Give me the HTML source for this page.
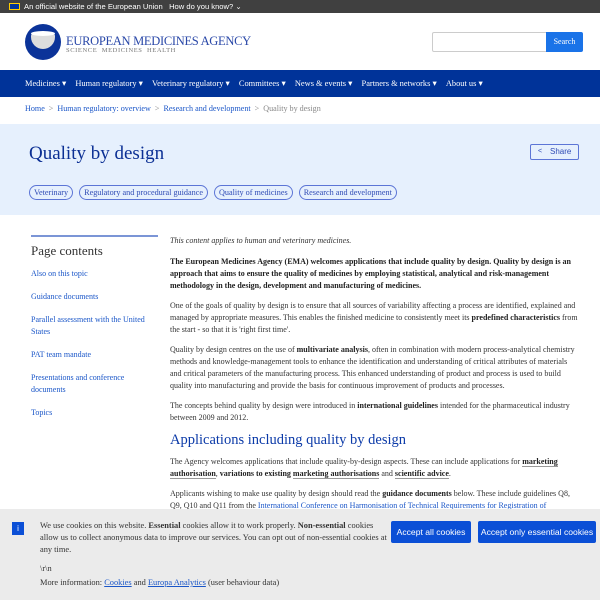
<!DOCTYPE html>
<html><head><meta charset="utf-8"><style>
*{margin:0;padding:0;box-sizing:border-box}
body{width:600px;height:600px;overflow:hidden;font-family:"Liberation Serif",serif;color:#333;background:#fff;position:relative}
.a{position:absolute}
.top{left:0;top:0;width:600px;height:13px;background:#404040;color:#fff;font:7.6px "Liberation Sans",sans-serif;line-height:13px;padding-left:24px}
.nav{left:0;top:70px;width:600px;height:27px;background:#003399;color:#fff;font-size:8.4px;line-height:27px;padding-left:25px;white-space:nowrap}
.nav span{margin-right:9.2px}
.hero{left:0;top:124px;width:600px;height:91px;background:#e6f0fd}
.tag{display:inline-block;border:1px solid #5c75d6;border-radius:8px;font-size:8.2px;color:#2f4bb5;padding:1px 4px;margin-right:6px;line-height:11px}
.side a{display:block;color:#1a56c8;font-size:8px;line-height:12px;text-decoration:none}
.c p{font-size:8px;line-height:12px;margin-bottom:8px;color:#333}
.c b{color:#222}
.u{border-bottom:1px solid #999}
.btn{background:#0b4fd6;color:#fff;font:8.6px "Liberation Sans",sans-serif;height:22px;line-height:22px;text-align:center;border-radius:2px}
.bc i{font-style:normal;margin:0 4px}
</style></head><body>
<div class="a top"><span style="display:inline-block;width:11px;height:7px;background:#039;border:1px solid #fc0;position:absolute;left:9px;top:3px"></span>An official website of the European Union &nbsp; How do you know? ⌄</div>
<div class="a" style="left:25px;top:24px;width:36px;height:36px;border-radius:50%;background:#0b3399"></div>
<div class="a" style="left:31px;top:33px;width:24px;height:16px;background:#ddd;border-radius:3px 3px 12px 12px"></div>
<div class="a" style="left:31px;top:31px;width:24px;height:5px;background:#fff;border-radius:50%"></div>
<div class="a" style="left:66px;top:34px;font-size:12.5px;color:#2a48a8;letter-spacing:-0.3px">EUROPEAN MEDICINES AGENCY</div>
<div class="a" style="left:66px;top:47px;font-size:6.5px;color:#777;letter-spacing:0.6px">SCIENCE &nbsp;MEDICINES &nbsp;HEALTH</div>
<div class="a" style="left:432px;top:32px;width:115px;height:20px;border:1px solid #ccc;border-radius:2px 0 0 2px"></div>
<div class="a" style="left:546px;top:32px;width:37px;height:20px;background:#1a73e8;color:#fff;font-size:8px;line-height:20px;text-align:center;border-radius:0 2px 2px 0">Search</div>
<div class="a nav"><span>Medicines ▾</span><span>Human regulatory ▾</span><span>Veterinary regulatory ▾</span><span>Committees ▾</span><span>News &amp; events ▾</span><span>Partners &amp; networks ▾</span><span>About us ▾</span></div>
<div class="a bc" style="left:25px;top:104px;font-size:8.1px;color:#888;white-space:nowrap"><span style="color:#1a56c8">Home</span><i>&gt;</i><span style="color:#1a56c8">Human regulatory: overview</span><i>&gt;</i><span style="color:#1a56c8">Research and development</span><i>&gt;</i>Quality by design</div>
<div class="a hero"></div>
<div class="a" style="left:29px;top:143px;font-size:19px;color:#0b2f94">Quality by design</div>
<div class="a" style="left:530px;top:144px;width:49px;height:16px;border:1px solid #5c75d6;border-radius:2px;font:8px 'Liberation Sans',sans-serif;color:#2f4bb5;line-height:14px;padding-left:19px">Share<span style="position:absolute;left:7px;top:0;font-size:7px">&lt;</span></div>
<div class="a" style="left:29px;top:182px;white-space:nowrap"><span class="tag">Veterinary</span><span class="tag">Regulatory and procedural guidance</span><span class="tag">Quality of medicines</span><span class="tag">Research and development</span></div>
<div class="a" style="left:31px;top:235px;width:127px;height:2px;background:#7b95d6"></div>
<div class="a side" style="left:31px;top:243px;width:127px">
<div style="font-size:13px;color:#333;margin-bottom:9px">Page contents</div>
<a>Also on this topic</a><a style="margin-top:11px">Guidance documents</a><a style="margin-top:11px">Parallel assessment with the United States</a><a style="margin-top:11px">PAT team mandate</a><a style="margin-top:11px">Presentations and conference documents</a><a style="margin-top:11px">Topics</a></div>
<div class="a c" style="left:170px;top:235px;width:408px">
<p style="margin-bottom:9px"><i>This content applies to human and veterinary medicines.</i></p>
<p><b>The European Medicines Agency (EMA) welcomes applications that include quality by design. Quality by design is an approach that aims to ensure the quality of medicines by employing statistical, analytical and risk-management methodology in the design, development and manufacturing of medicines.</b></p>
<p>One of the goals of quality by design is to ensure that all sources of variability affecting a process are identified, explained and managed by appropriate measures. This enables the finished medicine to consistently meet its <b>predefined characteristics</b> from the start - so that it is 'right first time'.</p>
<p>Quality by design centres on the use of <b>multivariate analysis</b>, often in combination with modern process-analytical chemistry methods and knowledge-management tools to enhance the identification and understanding of critical attributes of materials and critical parameters of the manufacturing process. This enhanced understanding of product and process is used to build quality into manufacturing and provide the basis for continuous improvement of products and processes.</p>
<p>The concepts behind quality by design were introduced in <b>international guidelines</b> intended for the pharmaceutical industry between 2009 and 2012.</p>
<div style="font-size:14.5px;color:#0b3aa8;margin:0 0 7px">Applications including quality by design</div>
<p>The Agency welcomes applications that include quality-by-design aspects. These can include applications for <b class="u">marketing authorisation</b>, <b>variations to existing <span class="u">marketing authorisations</span></b> and <b class="u">scientific advice</b>.</p>
<p>Applicants wishing to make use quality by design should read the <b>guidance documents</b> below. These include guidelines Q8, Q9, Q10 and Q11 from the <span style="color:#1a56c8">International Conference on Harmonisation of Technical Requirements for Registration of</span></p>
</div>
<div class="a" style="left:0;top:509px;width:600px;height:91px;background:#ebebeb"></div>
<div class="a" style="left:12px;top:522px;width:12px;height:13px;background:#0b4fd6;color:#fff;font:8px 'Liberation Sans';text-align:center;line-height:13px">i</div>
<div class="a" style="left:40px;top:520px;width:348px;font-size:8.4px;line-height:12px;color:#333">We use cookies on this website. <b>Essential</b> cookies allow it to work properly. <b>Non-essential</b> cookies allow us to collect anonymous data to improve our services. You can opt out of non-essential cookies at any time.<div style="margin-top:7px">\r\n</div><div style="margin-top:2px">More information: <u style="color:#1a56c8">Cookies</u> and <u style="color:#1a56c8">Europa Analytics</u> (user behaviour data)</div></div>
<div class="a btn" style="left:391px;top:521px;width:80px">Accept all cookies</div>
<div class="a btn" style="left:478px;top:521px;width:118px">Accept only essential cookies</div>
</body></html>
